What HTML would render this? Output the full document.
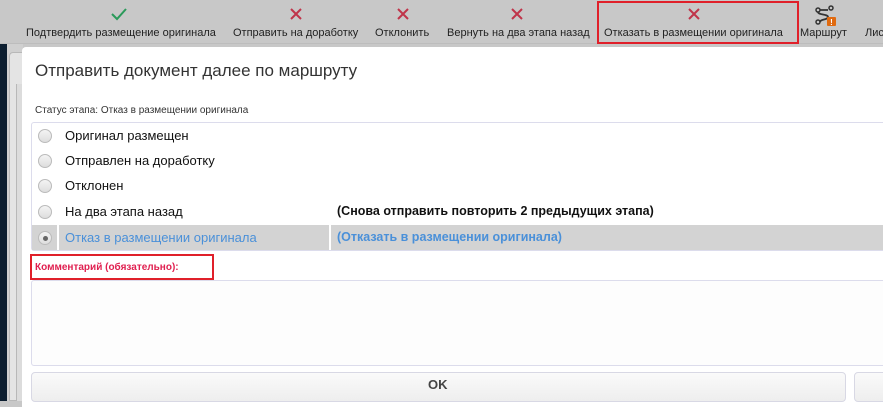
<!DOCTYPE html>
<html><head><meta charset="utf-8"><style>
*{margin:0;padding:0;box-sizing:border-box}
body{width:883px;height:401px;overflow:hidden;position:relative;background:#c8c8c8;font-family:"Liberation Sans","DejaVu Sans",sans-serif;}
.a{position:absolute;white-space:nowrap}
.tb{font-size:11px;color:#222;top:27px}
.ic{position:absolute;top:7px}
.rad{position:absolute;left:38px;width:14px;height:14px;border-radius:50%;border:1px solid #bbb;background:linear-gradient(#f4f4f4,#ddd)}
.rt{position:absolute;left:65px;font-size:13px;color:#111}
</style></head><body>
<div class="a" style="left:0;top:44px;width:7px;height:357px;background:#0c1e30"></div>
<div class="a" style="left:7px;top:44px;width:16px;height:357px;background:#d0d0d0"></div>
<div class="a" style="left:9px;top:52px;width:14px;height:349px;border:1px solid #b8b8b8;border-right:none;border-radius:4px 0 0 0;background:#e4e4e4"></div>
<div class="a" style="left:16px;top:84px;width:7px;height:317px;border-left:1px solid #b8b8b8;background:#dcdcdc"></div>
<div class="a" style="left:0;top:0;width:883px;height:44px;background:#c8c8c8;border-bottom:1px solid #bdbdbd"></div>
<svg class="ic" style="left:111px" width="16" height="14"><path d="M1 7 L6 12 L15 2" stroke="#2a9a5a" stroke-width="2" fill="none"/></svg>
<svg class="ic" style="left:289px" width="14" height="14"><path d="M2 2L12 12M12 2L2 12" stroke="#c0344a" stroke-width="2"/></svg>
<svg class="ic" style="left:396px" width="14" height="14"><path d="M2 2L12 12M12 2L2 12" stroke="#c0344a" stroke-width="2"/></svg>
<svg class="ic" style="left:510px" width="14" height="14"><path d="M2 2L12 12M12 2L2 12" stroke="#c0344a" stroke-width="2"/></svg>
<svg class="ic" style="left:687px" width="14" height="14"><path d="M2 2L12 12M12 2L2 12" stroke="#c0344a" stroke-width="2"/></svg>
<svg class="ic" style="left:814px;top:5px" width="24" height="22"><circle cx="4" cy="5" r="2" fill="none" stroke="#333" stroke-width="1.5"/><circle cx="17" cy="3" r="2" fill="none" stroke="#333" stroke-width="1.5"/><circle cx="4" cy="17" r="2" fill="none" stroke="#333" stroke-width="1.5"/><path d="M6 5H14M4 7C4 10 14 9 14 12C14 15 6 14 6 17" stroke="#333" stroke-width="1.8" fill="none"/><rect x="13" y="12" width="9" height="9" rx="1" fill="#e06a10"/><text x="17.5" y="20" font-size="8" fill="#fff" text-anchor="middle" font-weight="bold">!</text></svg>
<div class="a tb" style="left:26px">Подтвердить размещение оригинала</div>
<div class="a tb" style="left:233px">Отправить на доработку</div>
<div class="a tb" style="left:375px">Отклонить</div>
<div class="a tb" style="left:447px">Вернуть на два этапа назад</div>
<div class="a tb" style="left:604px">Отказать в размещении оригинала</div>
<div class="a" style="left:597px;top:1px;width:202px;height:43px;border:2px solid #e0202a"></div>
<div class="a tb" style="left:800px">Маршрут</div>
<div class="a tb" style="left:865px">Лис</div>
<div class="a" style="left:22px;top:47px;width:870px;height:360px;background:#fff;border-radius:4px 0 0 0"></div>
<div class="a" style="left:35px;top:61px;font-size:17px;color:#333">Отправить документ далее по маршруту</div>
<div class="a" style="left:35px;top:105px;font-size:10px;color:#333">Статус этапа: Отказ в размещении оригинала</div>
<div class="a" style="left:31px;top:122px;width:860px;height:129px;border:1px solid #dcdcec;border-radius:3px"></div>
<div class="a" style="left:32px;top:225px;width:860px;height:25px;background:#d3d3d3"></div>
<div class="a" style="left:57px;top:225px;width:2px;height:25px;background:#fff"></div>
<div class="a" style="left:329px;top:225px;width:2px;height:25px;background:#fff"></div>
<div class="rad" style="top:129px"></div><div class="rt" style="top:128px">Оригинал размещен</div>
<div class="rad" style="top:154px"></div><div class="rt" style="top:153px">Отправлен на доработку</div>
<div class="rad" style="top:179px"></div><div class="rt" style="top:178px">Отклонен</div>
<div class="rad" style="top:205px"></div><div class="rt" style="top:204px">На два этапа назад</div>
<div class="a" style="left:337px;top:204px;font-size:12.5px;font-weight:bold;color:#111">(Снова отправить повторить 2 предыдущих этапа)</div>
<div class="rad" style="top:231px"></div><div class="a" style="left:43px;top:236px;width:5px;height:5px;border-radius:50%;background:#666"></div>
<div class="rt" style="top:230px;color:#4a90d9">Отказ в размещении оригинала</div>
<div class="a" style="left:337px;top:230px;font-size:12.5px;font-weight:bold;color:#4a90d9">(Отказать в размещении оригинала)</div>
<div class="a" style="left:35px;top:262px;font-size:10px;font-weight:bold;color:#e02050">Комментарий (обязательно):</div>
<div class="a" style="left:30px;top:254px;width:184px;height:26px;border:2px solid #e0202a"></div>
<div class="a" style="left:31px;top:280px;width:860px;height:86px;border:1px solid #dcdcec;border-radius:3px;background:#fdfdfd"></div>
<div class="a" style="left:31px;top:372px;width:815px;height:30px;border:1px solid #d8d8e4;border-radius:4px;background:linear-gradient(#fafafa,#eeeeee)"></div>
<div class="a" style="left:428px;top:377px;font-size:13px;font-weight:bold;color:#444">OK</div>
<div class="a" style="left:854px;top:372px;width:40px;height:30px;border:1px solid #d8d8e4;border-radius:4px;background:linear-gradient(#fafafa,#eeeeee)"></div>
</body></html>
